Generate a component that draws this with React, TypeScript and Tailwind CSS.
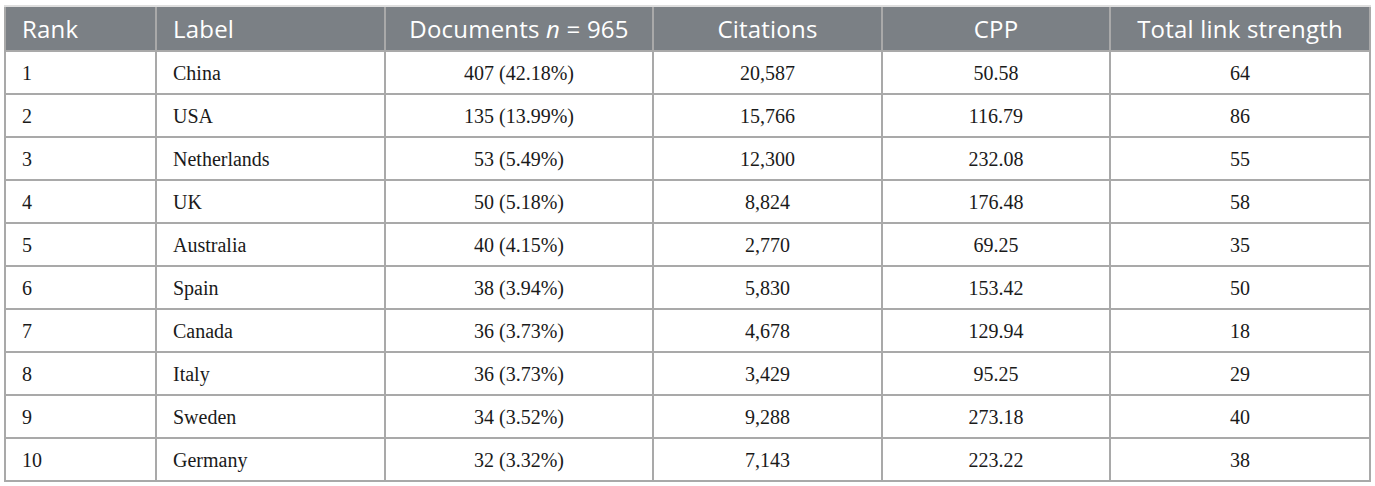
const rows = [
  ["1", "China", "407 (42.18%)", "20,587", "50.58", "64"],
  ["2", "USA", "135 (13.99%)", "15,766", "116.79", "86"],
  ["3", "Netherlands", "53 (5.49%)", "12,300", "232.08", "55"],
  ["4", "UK", "50 (5.18%)", "8,824", "176.48", "58"],
  ["5", "Australia", "40 (4.15%)", "2,770", "69.25", "35"],
  ["6", "Spain", "38 (3.94%)", "5,830", "153.42", "50"],
  ["7", "Canada", "36 (3.73%)", "4,678", "129.94", "18"],
  ["8", "Italy", "36 (3.73%)", "3,429", "95.25", "29"],
  ["9", "Sweden", "34 (3.52%)", "9,288", "273.18", "40"],
  ["10", "Germany", "32 (3.32%)", "7,143", "223.22", "38"],
];

export default function App() {
  return (
    <div className="bg-white w-[1375px] h-[486px] pt-[5px] pl-[4px]">
      <div className="w-[1367px] grid grid-cols-[149px_227px_266px_227px_226px_258px] gap-[2px] bg-[#a9a9a9] px-[2px] pb-[2px] border-t-2 border-[#dedede]">
        <div className="contents font-['Open_Sans',sans-serif] text-[24px] tracking-[0.2px] text-white">
          <div className="h-[43px] bg-[#7b8085] flex items-center pl-[16px]">Rank</div>
          <div className="h-[43px] bg-[#7b8085] flex items-center pl-[16px]">Label</div>
          <div className="h-[43px] bg-[#7b8085] flex items-center justify-center">
            Documents&nbsp;<i>n</i>&nbsp;=&nbsp;965
          </div>
          <div className="h-[43px] bg-[#7b8085] flex items-center justify-center">Citations</div>
          <div className="h-[43px] bg-[#7b8085] flex items-center justify-center">CPP</div>
          <div className="h-[43px] bg-[#7b8085] flex items-center justify-center">Total link strength</div>
        </div>
        {rows.map((r) => (
          <div key={r[0]} className="contents font-['Liberation_Serif',serif] text-[20px] text-[#1a1a1a]">
            <div className="h-[41px] bg-white flex items-center pl-[16px]">{r[0]}</div>
            <div className="h-[41px] bg-white flex items-center pl-[16px]">{r[1]}</div>
            <div className="h-[41px] bg-white flex items-center justify-center">{r[2]}</div>
            <div className="h-[41px] bg-white flex items-center justify-center">{r[3]}</div>
            <div className="h-[41px] bg-white flex items-center justify-center">{r[4]}</div>
            <div className="h-[41px] bg-white flex items-center justify-center">{r[5]}</div>
          </div>
        ))}
      </div>
    </div>
  );
}
